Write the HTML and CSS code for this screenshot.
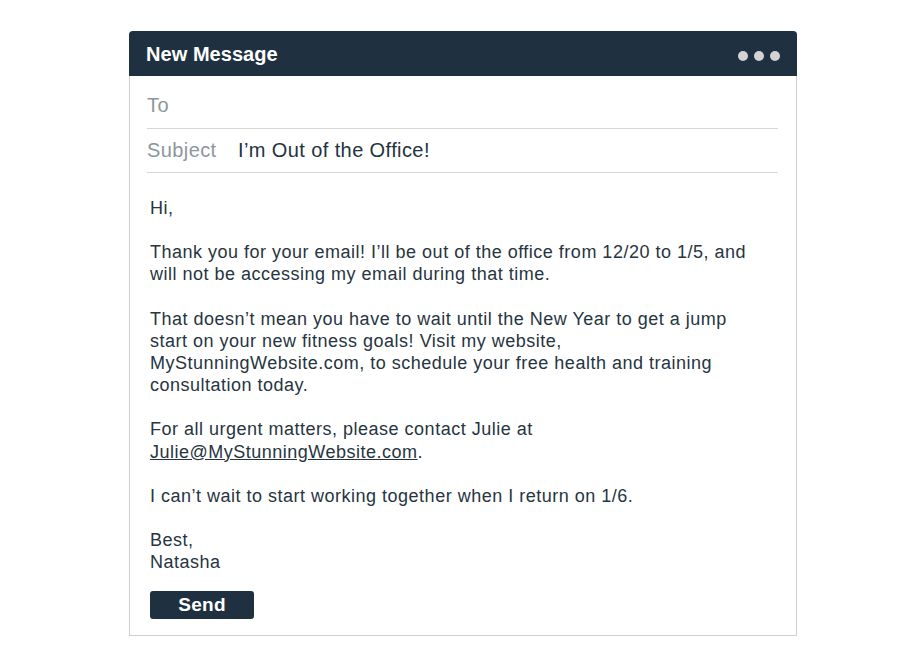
FILE: index.html
```html
<!DOCTYPE html>
<html>
<head>
<meta charset="utf-8">
<link rel="stylesheet" href="styles.css">
</head>
<body>
<div class="window">
  <div class="titlebar">
    <span class="title">New Message</span>
    <span class="dots"><i></i><i></i><i></i></span>
  </div>
  <div class="fields">
    <div class="field field-to"><span class="label">To</span></div>
    <div class="field field-subject"><span class="label">Subject</span><span class="value">I’m Out of the Office!</span></div>
  </div>
  <div class="body">
    <p>Hi,</p>
    <p>Thank you for your email! I’ll be out of the office from 12/20 to 1/5, and<br>will not be accessing my email during that time.</p>
    <p>That doesn’t mean you have to wait until the New Year to get a jump<br>start on your new fitness goals! Visit my website,<br>MyStunningWebsite.com, to schedule your free health and training<br>consultation today.</p>
    <p>For all urgent matters, please contact Julie at<br><a href="#">Julie@MyStunningWebsite.com</a>.</p>
    <p>I can’t wait to start working together when I return on 1/6.</p>
    <p>Best,<br>Natasha</p>
    <button class="send">Send</button>
  </div>
</div>
</body>
</html>
```
FILE: styles.css
```css
html, body {
  margin: 0;
  padding: 0;
  background: #ffffff;
}
body {
  font-family: "Liberation Sans", Arial, sans-serif;
  padding: 31px 0 0 129px;
}
.window {
  width: 666px;
  border: 1px solid #cfcfcf;
  border-top: none;
  border-radius: 4px 4px 0 0;
  background: #fff;
}
.titlebar {
  box-sizing: border-box;
  height: 45px;
  margin: 0 -1px;
  background: #1f3140;
  border-radius: 4px 4px 0 0;
  display: flex;
  align-items: center;
  justify-content: space-between;
  padding: 2px 17px 0 17px;
}
.title {
  color: #fff;
  font-weight: bold;
  font-size: 20px;
  letter-spacing: 0.05px;
}
.dots {
  display: flex;
  gap: 6px;
  padding-top: 2px;
}
.dots i {
  display: block;
  width: 10px;
  height: 10px;
  border-radius: 50%;
  background: #d3d3d3;
}
.fields {
  padding: 0 18px 0 17px;
}
.field {
  display: flex;
  align-items: center;
  border-bottom: 1px solid #d6d6d6;
  font-size: 20px;
  line-height: 22px;
  letter-spacing: 0.4px;
}
.field-to {
  padding: 18px 0 12px;
}
.field-subject {
  padding: 10px 0 11px;
}
.label {
  color: #8c969d;
  width: 91px;
}
.value {
  color: #22333f;
}
.body {
  padding: 24px 20px 16px 20px;
  font-size: 18px;
  letter-spacing: 0.5px;
  line-height: 22.2px;
  color: #26353f;
}
.body p {
  margin: 0 0 22px;
}
.body p:last-of-type {
  margin-bottom: 18px;
}
.body a {
  color: #26353f;
  text-decoration: underline;
}
.send {
  display: block;
  width: 104px;
  height: 28px;
  border: none;
  border-radius: 3px;
  background: #1f3140;
  color: #fff;
  font-family: "Liberation Sans", Arial, sans-serif;
  font-weight: bold;
  font-size: 19px;
  letter-spacing: 0.3px;
  padding: 0;
  cursor: pointer;
}
```
